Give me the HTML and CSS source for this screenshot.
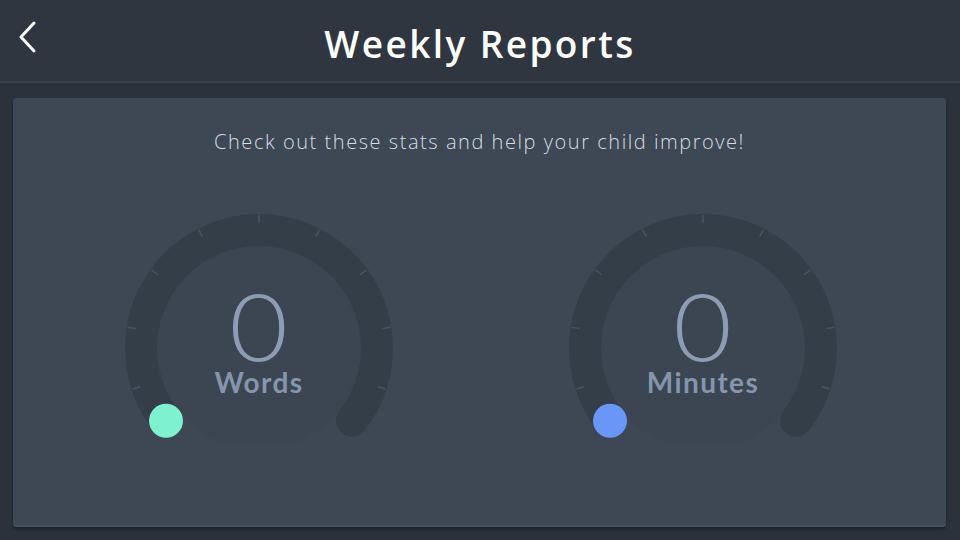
FILE: index.html
```html
<!DOCTYPE html>
<html lang="en">
<head>
    <meta charset="UTF-8">
    <title>Weekly Reports</title>
    <link rel="stylesheet" href="styles.css">
</head>
<body>
    <header class="topbar">
        <button class="back" aria-label="Back">
            <svg width="20" height="34" viewBox="0 0 20 34">
                <polyline points="16,3 3,17 16,31" fill="none" stroke="#fff" stroke-width="3" stroke-linecap="round" stroke-linejoin="round"/>
            </svg>
        </button>
        <h1>Weekly Reports</h1>
    </header>

    <main class="panel">
        <p class="intro">Check out these stats and help your child improve!</p>
        <div class="gauges">
            <div class="gauge">
                <svg class="dial" width="290" height="232" viewBox="0 0 290 232">
                    <circle cx="145" cy="135" r="102" class="face"/>
                    <path d="M52 207.7 A118 118 0 1 1 238 207.7" class="track"/>
                    <g class="ticks">
                        <line x1="145" y1="2" x2="145" y2="10" transform="rotate(0 145 135)"/>
                        <line x1="145" y1="2" x2="145" y2="10" transform="rotate(27 145 135)"/>
                        <line x1="145" y1="2" x2="145" y2="10" transform="rotate(54 145 135)"/>
                        <line x1="145" y1="2" x2="145" y2="10" transform="rotate(81 145 135)"/>
                        <line x1="145" y1="2" x2="145" y2="10" transform="rotate(108 145 135)"/>
                        <line x1="145" y1="2" x2="145" y2="10" transform="rotate(-27 145 135)"/>
                        <line x1="145" y1="2" x2="145" y2="10" transform="rotate(-54 145 135)"/>
                        <line x1="145" y1="2" x2="145" y2="10" transform="rotate(-81 145 135)"/>
                        <line x1="145" y1="2" x2="145" y2="10" transform="rotate(-108 145 135)"/>
                    </g>
                    <circle cx="52" cy="207.7" r="17" class="knob knob-words"/>
                </svg>
                <div class="readout">
                    <span class="value">0</span>
                    <span class="unit">Words</span>
                </div>
            </div>
            <div class="gauge">
                <svg class="dial" width="290" height="232" viewBox="0 0 290 232">
                    <circle cx="145" cy="135" r="102" class="face"/>
                    <path d="M52 207.7 A118 118 0 1 1 238 207.7" class="track"/>
                    <g class="ticks">
                        <line x1="145" y1="2" x2="145" y2="10" transform="rotate(0 145 135)"/>
                        <line x1="145" y1="2" x2="145" y2="10" transform="rotate(27 145 135)"/>
                        <line x1="145" y1="2" x2="145" y2="10" transform="rotate(54 145 135)"/>
                        <line x1="145" y1="2" x2="145" y2="10" transform="rotate(81 145 135)"/>
                        <line x1="145" y1="2" x2="145" y2="10" transform="rotate(108 145 135)"/>
                        <line x1="145" y1="2" x2="145" y2="10" transform="rotate(-27 145 135)"/>
                        <line x1="145" y1="2" x2="145" y2="10" transform="rotate(-54 145 135)"/>
                        <line x1="145" y1="2" x2="145" y2="10" transform="rotate(-81 145 135)"/>
                        <line x1="145" y1="2" x2="145" y2="10" transform="rotate(-108 145 135)"/>
                    </g>
                    <circle cx="52" cy="207.7" r="17" class="knob knob-minutes"/>
                </svg>
                <div class="readout">
                    <span class="value">0</span>
                    <span class="unit">Minutes</span>
                </div>
            </div>
        </div>
    </main>
</body>
</html>
```

FILE: styles.css
```css
body {
    margin: 0;
    height: 540px;
    background-color: #2b323c;
    font-family: 'Open Sans', 'Lato', sans-serif;
    overflow: hidden;
}

.topbar {
    position: relative;
    height: 81px;
    background-color: #2f3640;
    border-bottom: 2px solid #3a424d;
    display: flex;
    justify-content: center;
    align-items: center;
}

.back {
    position: absolute;
    left: 18px;
    top: 20px;
    padding: 0;
    border: none;
    background: none;
    cursor: pointer;
}

.topbar h1 {
    margin: 0;
    margin-top: 6px;
    color: #ffffff;
    font-size: 37px;
    font-weight: 600;
    letter-spacing: 2.4px;
}

.panel {
    margin: 15px 14px 0 13px;
    height: 429px;
    background-color: #3d4854;
    border-radius: 3px;
    box-shadow: 0 2px 3px rgba(0, 0, 0, 0.35), inset 0 -5px 0 -3px rgba(255, 255, 255, 0.06);
    display: flex;
    flex-direction: column;
    align-items: center;
}

.intro {
    margin: 30px 0 0;
    color: #d6dce3;
    font-size: 20px;
    font-weight: 300;
    letter-spacing: 1.55px;
}

.gauges {
    display: flex;
    gap: 154px;
    margin-top: 58px;
    margin-left: 3px;
}

.gauge {
    display: grid;
    justify-items: center;
}

.gauge > * {
    grid-area: 1 / 1;
}

.face {
    fill: #3b4652;
}

.track {
    fill: none;
    stroke: #343e49;
    stroke-width: 32;
    stroke-linecap: round;
}

.ticks line {
    stroke: #485360;
    stroke-width: 1.6;
}

.knob-words {
    fill: #7ef2d0;
}

.knob-minutes {
    fill: #6a96f8;
}

.readout {
    display: flex;
    flex-direction: column;
    align-items: center;
    padding-top: 76px;
    font-family: 'Lato', sans-serif;
}

.value {
    color: #8c9cb4;
    font-size: 92px;
    font-weight: 300;
    line-height: 0.8;
    transform: scaleX(1.1);
}

.unit {
    margin-top: 4px;
    color: #8595ad;
    font-size: 28px;
    font-weight: 700;
    letter-spacing: 1.4px;
    line-height: 1.1;
}
```
